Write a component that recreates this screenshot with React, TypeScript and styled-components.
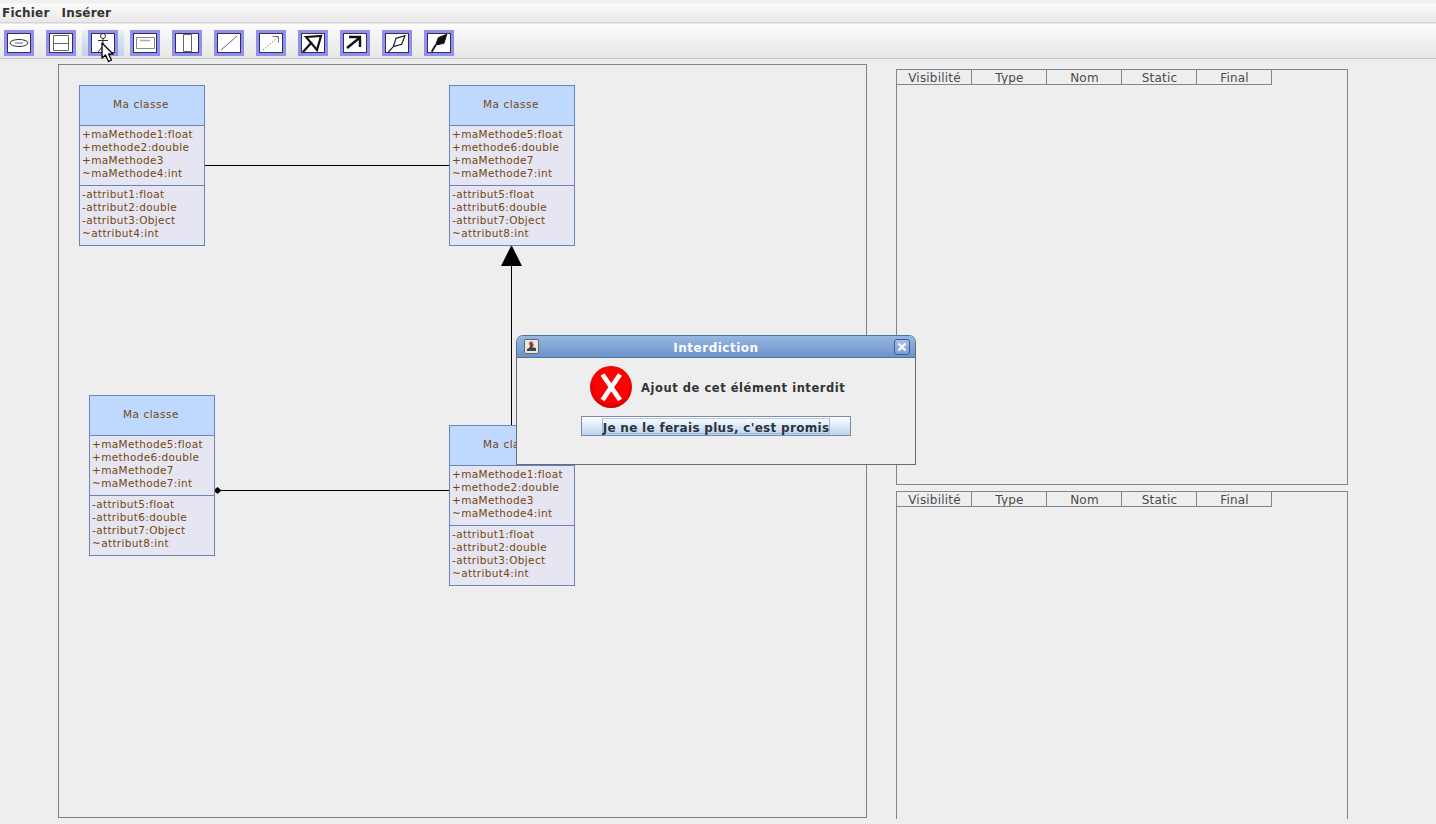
import React from "react";
import styled, { createGlobalStyle } from "styled-components";

const Global = createGlobalStyle`
  html, body { margin: 0; padding: 0; background: #eeeeee; overflow: hidden; }
  #root { width: 1436px; height: 824px; }
`;

const Page = styled.div`
  position: relative;
  width: 1436px;
  height: 824px;
  overflow: hidden;
  display: flex;
  flex-direction: column;
  background: #eeeeee;
  font-family: "DejaVu Sans", sans-serif;
  color: #333333;
`;

const MenuBar = styled.div`
  height: 23px;
  flex: none;
  display: flex;
  align-items: center;
  gap: 12px;
  padding: 3px 0 0 2px;
  box-sizing: border-box;
  background: linear-gradient(#f0f0f0 0 3px, #fbfbfb 4px, #e8e8e8 22px);
  border-bottom: 1px solid #d4d4d4;
`;

const MenuItem = styled.span`
  font-size: 12px;
  font-weight: bold;
  letter-spacing: 0.2px;
  color: #333333;
`;

const ToolBar = styled.div`
  height: 36px;
  flex: none;
  display: flex;
  gap: 12px;
  padding: 6px 0 0 4px;
  box-sizing: border-box;
  background: linear-gradient(#fcfcfc, #e6e6e6);
  border-top: 1px solid #e8e8e8;
  border-bottom: 1px solid #c4c4c8;
`;

const ToolSlot = styled.div`
  position: relative;
  z-index: 0;
  flex: none;
`;

const ToolButton = styled.div<{ $hover?: boolean }>`
  position: relative;
  width: 30px;
  height: 26px;
  box-sizing: border-box;
  border: 3px solid #9090ee;
  background: #ffffff;
  display: flex;
  align-items: center;
  justify-content: center;
  & > svg { display: block; position: relative; z-index: 1; }
  &::after {
    content: "";
    position: absolute;
    inset: 0;
    border: 1px solid #30305a;
  }
  &::before {
    content: "";
    display: ${(p) => (p.$hover ? "block" : "none")};
    position: absolute;
    left: -9px;
    right: -9px;
    top: -3px;
    bottom: -3px;
    z-index: -1;
    background: linear-gradient(rgba(190, 208, 235, 0.2), rgba(190, 208, 235, 0.9));
  }
`;

const Workspace = styled.div`
  flex: 1;
  min-height: 0;
  display: flex;
  align-items: flex-start;
  gap: 29px;
  padding: 5px 0 0 58px;
`;

const Canvas = styled.div`
  position: relative;
  width: 809px;
  height: 754px;
  flex: none;
  box-sizing: border-box;
  border: 1px solid #7a8296;
`;

const Wires = styled.svg`
  position: absolute;
  left: -1px;
  top: -1px;
  width: 809px;
  height: 754px;
`;

const ClassBox = styled.div<{ $x: number; $y: number }>`
  position: absolute;
  left: ${(p) => p.$x}px;
  top: ${(p) => p.$y}px;
  width: 126px;
  height: 161px;
  box-sizing: border-box;
  border: 1px solid #6a84b8;
  background: #e6e6f2;
  color: #74480f;
  font-size: 10.5px;
  line-height: 13px;
  display: flex;
  flex-direction: column;
`;

const ClassTitle = styled.div`
  height: 39px;
  flex: none;
  display: flex;
  align-items: center;
  justify-content: center;
  background: #bfd8fe;
  font-size: 10.5px;
  letter-spacing: 0.5px;
  padding: 0 2px 3px 0;
  box-sizing: border-box;
`;

const Members = styled.div`
  height: 60px;
  flex: none;
  box-sizing: border-box;
  border-top: 1px solid #6a84b8;
  padding: 2px 0 0 2px;
  white-space: nowrap;
  letter-spacing: 0.35px;
`;

const SideColumn = styled.div`
  width: 452px;
  flex: none;
  display: flex;
  flex-direction: column;
  gap: 6px;
  margin-top: 5px;
`;

const TablePanel = styled.div<{ $height: number; $open?: boolean }>`
  height: ${(p) => p.$height}px;
  box-sizing: border-box;
  border: 1px solid #80868f;
  border-bottom: ${(p) => (p.$open ? "none" : "1px solid #80868f")};
`;

const HeaderRow = styled.div`
  display: flex;
  width: 375px;
`;

const HeaderCell = styled.div`
  width: 75px;
  height: 15px;
  box-sizing: border-box;
  border-right: 1px solid #80868f;
  border-bottom: 1px solid #80868f;
  padding-left: 1px;
  font-size: 12px;
  line-height: 16px;
  letter-spacing: 0.2px;
  text-align: center;
  color: #4a4a4a;
  overflow: hidden;
`;

const Dialog = styled.div`
  position: absolute;
  left: 516px;
  top: 335px;
  width: 400px;
  height: 130px;
  box-sizing: border-box;
  border: 1px solid #666c74;
  border-top-color: #4f74a8;
  border-radius: 7px 7px 0 0;
  background: #eeeeee;
  display: flex;
  flex-direction: column;
`;

const TitleBar = styled.div`
  position: relative;
  height: 22px;
  flex: none;
  box-sizing: border-box;
  padding-top: 3px;
  display: flex;
  align-items: center;
  justify-content: center;
  border-radius: 6px 6px 0 0;
  border-bottom: 1px solid #54739f;
  background: linear-gradient(#97b7e2, #6b93cb);
  color: #ffffff;
  font-size: 12px;
  font-weight: bold;
  letter-spacing: 0.5px;
`;

const TitleIcon = styled.svg`
  position: absolute;
  left: 7px;
  top: 3px;
`;

const CloseButton = styled.div`
  position: absolute;
  right: 5px;
  top: 3px;
  width: 16px;
  height: 16px;
  box-sizing: border-box;
  border: 1px solid #3f5f90;
  border-radius: 3px;
  background: linear-gradient(#a4c0e6, #7c9fd2);
  display: flex;
  align-items: center;
  justify-content: center;
`;

const MessageRow = styled.div`
  display: flex;
  align-items: center;
  gap: 9px;
  margin: 7px 0 0 73px;
  height: 44px;
`;

const Message = styled.span`
  font-size: 11.5px;
  font-weight: bold;
  letter-spacing: 0.55px;
  color: #333333;
  margin-top: 2px;
`;

const PromiseButton = styled.div`
  align-self: center;
  margin: 7px 0 0 0;
  width: 270px;
  height: 20px;
  box-sizing: border-box;
  border: 1px solid #7a8ca8;
  background: linear-gradient(#ffffff, #bcd3ee);
  display: flex;
  align-items: center;
  justify-content: center;
`;

const PromiseLabel = styled.span`
  border: 1px solid #9ab8e0;
  border-top-color: #b8cce8;
  font-size: 12px;
  line-height: 16px;
  padding-top: 1px;
  height: 16px;
  box-sizing: border-box;
  font-weight: bold;
  letter-spacing: 0.3px;
  color: #2a3340;
`;

const Cursor = styled.svg`
  position: absolute;
  left: 100px;
  top: 42px;
`;

const methodsA = ["+maMethode1:float", "+methode2:double", "+maMethode3", "~maMethode4:int"];
const attrsA = ["-attribut1:float", "-attribut2:double", "-attribut3:Object", "~attribut4:int"];
const methodsB = ["+maMethode5:float", "+methode6:double", "+maMethode7", "~maMethode7:int"];
const attrsB = ["-attribut5:float", "-attribut6:double", "-attribut7:Object", "~attribut8:int"];

const boxes = [
  { x: 20, y: 20, methods: methodsA, attrs: attrsA },
  { x: 390, y: 20, methods: methodsB, attrs: attrsB },
  { x: 30, y: 330, methods: methodsB, attrs: attrsB },
  { x: 390, y: 360, methods: methodsA, attrs: attrsA },
];

const cols = ["Visibilité", "Type", "Nom", "Static", "Final"];

const ic = { fill: "none", stroke: "#303030", strokeWidth: 1 } as const;
const tools: React.ReactNode[] = [
  <svg width="22" height="18" viewBox="0 0 22 18" key="0"><ellipse cx="11" cy="9" rx="9" ry="3.500" {...ic} /><path d="M7 9h8" stroke="#999" strokeWidth="1.500" /></svg>,
  <svg width="22" height="18" viewBox="0 0 22 18" key="1"><path d="M3.500 1.500h15v15h-15zM3.500 9.500h15" {...ic} stroke="#666" /></svg>,
  <svg width="22" height="20" viewBox="0 0 22 20" key="2"><circle cx="11" cy="3" r="2.500" {...ic} /><path d="M11 5.500v7.500M6 7.500h10M11 13l-5 6M11 13l5 6" {...ic} /></svg>,
  <svg width="22" height="18" viewBox="0 0 22 18" key="3"><path d="M2.500 3.500h18v11h-18z" {...ic} stroke="#888" /><path d="M6 6.500h10" stroke="#aaa" strokeWidth="1.500" /></svg>,
  <svg width="22" height="20" viewBox="0 0 22 20" key="4"><path d="M7.500 1.500h8v17h-8z" {...ic} stroke="#666" /></svg>,
  <svg width="22" height="18" viewBox="0 0 22 18" key="5"><path d="M3 16L19 2" {...ic} stroke="#666" /></svg>,
  <svg width="22" height="18" viewBox="0 0 22 18" key="6"><path d="M3 16L18 3" {...ic} stroke="#777" strokeDasharray="1.500 1.500" /><path d="M12.500 2.500h6v6" {...ic} stroke="#777" /></svg>,
  <svg width="24" height="20" viewBox="0 0 24 20" key="7"><path d="M2 19L11 9M5 4l15-1-4 14z" fill="none" stroke="#111" strokeWidth="2.200" /></svg>,
  <svg width="24" height="20" viewBox="0 0 24 20" key="8"><path d="M4 15L17 4.500M6 4h11v10" fill="none" stroke="#111" strokeWidth="2.400" /></svg>,
  <svg width="24" height="20" viewBox="0 0 24 20" key="9"><path d="M2.700 20L8.300 13.700M8.300 13.700L11 5.300L20 2.700L16.700 11.300z" fill="none" stroke="#222" strokeWidth="1.200" /></svg>,
  <svg width="24" height="20" viewBox="0 0 24 20" key="10"><path d="M4.700 18.700L8.700 12" stroke="#111" strokeWidth="1.800" /><path d="M8.700 12L11.300 4.700L19.700 1.300L17 10.300z" fill="#111" stroke="#111" /></svg>,
];

export default function App() {
  return (
    <Page>
      <Global />
      <MenuBar>
        <MenuItem>Fichier</MenuItem>
        <MenuItem>Insérer</MenuItem>
      </MenuBar>
      <ToolBar>
        {tools.map((t, i) => (
          <ToolSlot key={i}>
            <ToolButton $hover={i === 2}>{t}</ToolButton>
          </ToolSlot>
        ))}
      </ToolBar>
      <Workspace>
        <Canvas>
          <Wires viewBox="0 0 809 754">
            <path d="M146 101.500H392" stroke="#000" strokeWidth="1" />
            <path d="M453.500 191V362" stroke="#000" strokeWidth="1" />
            <path d="M453.500 181L443 202H464z" fill="#000" />
            <path d="M158 426.500H392" stroke="#000" strokeWidth="1" />
            <path d="M159.500 423L163.500 426.500L159.500 430L155.500 426.500z" fill="#000" />
          </Wires>
          {boxes.map((b, i) => (
            <ClassBox key={i} $x={b.x} $y={b.y}>
              <ClassTitle>Ma classe</ClassTitle>
              <Members>{b.methods.map((m) => <div key={m}>{m}</div>)}</Members>
              <Members>{b.attrs.map((m) => <div key={m}>{m}</div>)}</Members>
            </ClassBox>
          ))}
        </Canvas>
        <SideColumn>
          <TablePanel $height={416}>
            <HeaderRow>{cols.map((c) => <HeaderCell key={c}>{c}</HeaderCell>)}</HeaderRow>
          </TablePanel>
          <TablePanel $height={328} $open>
            <HeaderRow>{cols.map((c) => <HeaderCell key={c}>{c}</HeaderCell>)}</HeaderRow>
          </TablePanel>
        </SideColumn>
      </Workspace>
      <Cursor width="16" height="21" viewBox="0 0 16 21">
        <path d="M2 1V16L5.500 13L8.500 19.500L11.500 18L8.500 12H13z" fill="#ffffff" stroke="#000000" strokeWidth="1.300" strokeLinejoin="round" />
      </Cursor>
      <Dialog>
        <TitleBar>
          <TitleIcon width="15" height="15" viewBox="0 0 15 15">
            <rect x="0.500" y="0.500" width="14" height="14" rx="1.500" fill="#e8e8e8" stroke="#666" />
            <path d="M6 3l4 3-2 2 4 1v3H3v-2l2-1 1-2z" fill="#444" />
            <circle cx="7" cy="4.500" r="2" fill="#c03030" />
          </TitleIcon>
          Interdiction
          <CloseButton>
            <svg width="10" height="10" viewBox="0 0 10 10">
              <path d="M1.500 1.500L8.500 8.500M8.500 1.500L1.500 8.500" stroke="#ffffff" strokeWidth="2.200" />
            </svg>
          </CloseButton>
        </TitleBar>
        <MessageRow>
          <svg width="42" height="42" viewBox="0 0 42 42">
            <defs>
              <radialGradient id="err" cx="0.500" cy="0.450" r="0.550">
                <stop offset="0.750" stopColor="#ff0000" />
                <stop offset="1" stopColor="#cc0000" />
              </radialGradient>
            </defs>
            <circle cx="21" cy="21" r="21" fill="url(#err)" />
            <path d="M12.500 8.500L30 34M30 8.500L12.500 34" stroke="#ffffff" strokeWidth="4.800" />
          </svg>
          <Message>Ajout de cet élément interdit</Message>
        </MessageRow>
        <PromiseButton>
          <PromiseLabel>Je ne le ferais plus, c'est promis</PromiseLabel>
        </PromiseButton>
      </Dialog>
    </Page>
  );
}
